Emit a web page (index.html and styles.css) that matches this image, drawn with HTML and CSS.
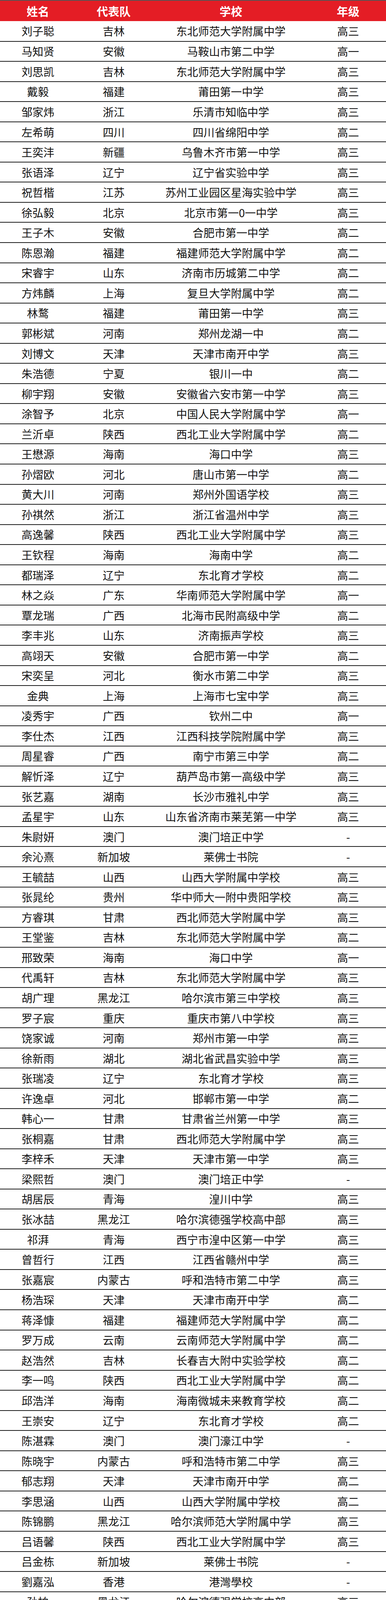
FILE: index.html
```html
<!DOCTYPE html>
<html lang="zh-CN">
<head>
<meta charset="utf-8">
<title>名单</title>
<link rel="stylesheet" href="styles.css">
</head>
<body>
<table class="roster">
<colgroup><col class="c-name"><col class="c-team"><col class="c-school"><col class="c-grade"></colgroup>
<thead><tr><th>姓名</th><th>代表队</th><th>学校</th><th>年级</th></tr></thead>
<tbody>
<tr><td>刘子聪</td><td>吉林</td><td>东北师范大学附属中学</td><td>高三</td></tr>
<tr><td>马知贤</td><td>安徽</td><td>马鞍山市第二中学</td><td>高一</td></tr>
<tr><td>刘思凯</td><td>吉林</td><td>东北师范大学附属中学</td><td>高三</td></tr>
<tr><td>戴毅</td><td>福建</td><td>莆田第一中学</td><td>高三</td></tr>
<tr><td>邹家炜</td><td>浙江</td><td>乐清市知临中学</td><td>高三</td></tr>
<tr><td>左希萌</td><td>四川</td><td>四川省绵阳中学</td><td>高二</td></tr>
<tr><td>王奕沣</td><td>新疆</td><td>乌鲁木齐市第一中学</td><td>高三</td></tr>
<tr><td>张语泽</td><td>辽宁</td><td>辽宁省实验中学</td><td>高三</td></tr>
<tr><td>祝哲楷</td><td>江苏</td><td>苏州工业园区星海实验中学</td><td>高三</td></tr>
<tr><td>徐弘毅</td><td>北京</td><td>北京市第一0一中学</td><td>高三</td></tr>
<tr><td>王子木</td><td>安徽</td><td>合肥市第一中学</td><td>高二</td></tr>
<tr><td>陈恩瀚</td><td>福建</td><td>福建师范大学附属中学</td><td>高二</td></tr>
<tr><td>宋睿宇</td><td>山东</td><td>济南市历城第二中学</td><td>高二</td></tr>
<tr><td>方炜麟</td><td>上海</td><td>复旦大学附属中学</td><td>高二</td></tr>
<tr><td>林鹜</td><td>福建</td><td>莆田第一中学</td><td>高三</td></tr>
<tr><td>郭彬斌</td><td>河南</td><td>郑州龙湖一中</td><td>高二</td></tr>
<tr><td>刘博文</td><td>天津</td><td>天津市南开中学</td><td>高三</td></tr>
<tr><td>朱浩德</td><td>宁夏</td><td>银川一中</td><td>高二</td></tr>
<tr><td>柳宇翔</td><td>安徽</td><td>安徽省六安市第一中学</td><td>高三</td></tr>
<tr><td>涂智予</td><td>北京</td><td>中国人民大学附属中学</td><td>高一</td></tr>
<tr><td>兰沂卓</td><td>陕西</td><td>西北工业大学附属中学</td><td>高二</td></tr>
<tr><td>王懋源</td><td>海南</td><td>海口中学</td><td>高三</td></tr>
<tr><td>孙熠欧</td><td>河北</td><td>唐山市第一中学</td><td>高二</td></tr>
<tr><td>黄大川</td><td>河南</td><td>郑州外国语学校</td><td>高三</td></tr>
<tr><td>孙祺然</td><td>浙江</td><td>浙江省温州中学</td><td>高三</td></tr>
<tr><td>高逸馨</td><td>陕西</td><td>西北工业大学附属中学</td><td>高三</td></tr>
<tr><td>王钦程</td><td>海南</td><td>海南中学</td><td>高二</td></tr>
<tr><td>都瑞泽</td><td>辽宁</td><td>东北育才学校</td><td>高二</td></tr>
<tr><td>林之焱</td><td>广东</td><td>华南师范大学附属中学</td><td>高一</td></tr>
<tr><td>覃龙瑞</td><td>广西</td><td>北海市民附高级中学</td><td>高二</td></tr>
<tr><td>李丰兆</td><td>山东</td><td>济南振声学校</td><td>高三</td></tr>
<tr><td>高翊天</td><td>安徽</td><td>合肥市第一中学</td><td>高二</td></tr>
<tr><td>宋奕呈</td><td>河北</td><td>衡水市第二中学</td><td>高三</td></tr>
<tr><td>金典</td><td>上海</td><td>上海市七宝中学</td><td>高三</td></tr>
<tr><td>凌秀宇</td><td>广西</td><td>钦州二中</td><td>高一</td></tr>
<tr><td>李仕杰</td><td>江西</td><td>江西科技学院附属中学</td><td>高三</td></tr>
<tr><td>周星睿</td><td>广西</td><td>南宁市第三中学</td><td>高二</td></tr>
<tr><td>解忻泽</td><td>辽宁</td><td>葫芦岛市第一高级中学</td><td>高三</td></tr>
<tr><td>张艺嘉</td><td>湖南</td><td>长沙市雅礼中学</td><td>高三</td></tr>
<tr><td>孟星宇</td><td>山东</td><td>山东省济南市莱芜第一中学</td><td>高三</td></tr>
<tr><td>朱尉妍</td><td>澳门</td><td>澳门培正中学</td><td>-</td></tr>
<tr><td>余沁熹</td><td>新加坡</td><td>莱佛士书院</td><td>-</td></tr>
<tr><td>王毓喆</td><td>山西</td><td>山西大学附属中学校</td><td>高三</td></tr>
<tr><td>张晁纶</td><td>贵州</td><td>华中师大一附中贵阳学校</td><td>高三</td></tr>
<tr><td>方睿琪</td><td>甘肃</td><td>西北师范大学附属中学</td><td>高三</td></tr>
<tr><td>王堂鉴</td><td>吉林</td><td>东北师范大学附属中学</td><td>高二</td></tr>
<tr><td>邢致荣</td><td>海南</td><td>海口中学</td><td>高一</td></tr>
<tr><td>代禹轩</td><td>吉林</td><td>东北师范大学附属中学</td><td>高三</td></tr>
<tr><td>胡广理</td><td>黑龙江</td><td>哈尔滨市第三中学校</td><td>高三</td></tr>
<tr><td>罗子宸</td><td>重庆</td><td>重庆市第八中学校</td><td>高三</td></tr>
<tr><td>饶家诚</td><td>河南</td><td>郑州市第一中学</td><td>高三</td></tr>
<tr><td>徐新雨</td><td>湖北</td><td>湖北省武昌实验中学</td><td>高三</td></tr>
<tr><td>张瑞凌</td><td>辽宁</td><td>东北育才学校</td><td>高三</td></tr>
<tr><td>许逸卓</td><td>河北</td><td>邯郸市第一中学</td><td>高二</td></tr>
<tr><td>韩心一</td><td>甘肃</td><td>甘肃省兰州第一中学</td><td>高三</td></tr>
<tr><td>张桐嘉</td><td>甘肃</td><td>西北师范大学附属中学</td><td>高三</td></tr>
<tr><td>李梓禾</td><td>天津</td><td>天津市第一中学</td><td>高三</td></tr>
<tr><td>梁熙哲</td><td>澳门</td><td>澳门培正中学</td><td>-</td></tr>
<tr><td>胡居辰</td><td>青海</td><td>湟川中学</td><td>高三</td></tr>
<tr><td>张冰喆</td><td>黑龙江</td><td>哈尔滨德强学校高中部</td><td>高三</td></tr>
<tr><td>祁湃</td><td>青海</td><td>西宁市湟中区第一中学</td><td>高三</td></tr>
<tr><td>曾哲行</td><td>江西</td><td>江西省赣州中学</td><td>高三</td></tr>
<tr><td>张嘉宸</td><td>内蒙古</td><td>呼和浩特市第二中学</td><td>高三</td></tr>
<tr><td>杨浩琛</td><td>天津</td><td>天津市南开中学</td><td>高二</td></tr>
<tr><td>蒋泽慷</td><td>福建</td><td>福建师范大学附属中学</td><td>高二</td></tr>
<tr><td>罗万成</td><td>云南</td><td>云南师范大学附属中学</td><td>高二</td></tr>
<tr><td>赵浩然</td><td>吉林</td><td>长春吉大附中实验学校</td><td>高二</td></tr>
<tr><td>李一鸣</td><td>陕西</td><td>西北工业大学附属中学</td><td>高二</td></tr>
<tr><td>邱浩洋</td><td>海南</td><td>海南微城未来教育学校</td><td>高二</td></tr>
<tr><td>王崇安</td><td>辽宁</td><td>东北育才学校</td><td>高二</td></tr>
<tr><td>陈湛霖</td><td>澳门</td><td>澳门濠江中学</td><td>-</td></tr>
<tr><td>陈晓宇</td><td>内蒙古</td><td>呼和浩特市第二中学</td><td>高三</td></tr>
<tr><td>郁志翔</td><td>天津</td><td>天津市南开中学</td><td>高二</td></tr>
<tr><td>李思涵</td><td>山西</td><td>山西大学附属中学校</td><td>高二</td></tr>
<tr><td>陈锦鹏</td><td>黑龙江</td><td>哈尔滨师范大学附属中学</td><td>高三</td></tr>
<tr><td>吕语馨</td><td>陕西</td><td>西北工业大学附属中学</td><td>高三</td></tr>
<tr><td>吕金栋</td><td>新加坡</td><td>莱佛士书院</td><td>-</td></tr>
<tr><td>劉嘉泓</td><td>香港</td><td>港灣學校</td><td>-</td></tr>
<tr><td>孙柏</td><td>黑龙江</td><td>哈尔滨德强学校高中部</td><td>高三</td></tr>
<tr><td>蒋双相</td><td>甘肃</td><td>甘肃省庆阳第一中学</td><td>高三</td></tr>
<tr><td>范文超</td><td>新疆</td><td>新疆生产建设兵团第二中学</td><td>高三</td></tr>
<tr><td>庞宏宁</td><td>吉林</td><td>四平市第一高级中学</td><td>高三</td></tr>
<tr><td>黄和鑫</td><td>贵州</td><td>贵阳市第一中学</td><td>高二</td></tr>
<tr><td>刘铠睿</td><td>新疆</td><td>昌吉州一中</td><td>高三</td></tr>
<tr><td>刘松瑞</td><td>贵州</td><td>贵阳市第一中学</td><td>高一</td></tr>
<tr><td>田文华</td><td>内蒙古</td><td>鄂尔多斯市第一中学</td><td>高三</td></tr>
<tr><td>卢芳豪</td><td>海南</td><td>文昌中学</td><td>高三</td></tr>
<tr><td>李和兴</td><td>宁夏</td><td>银川一中</td><td>高三</td></tr>
<tr><td>缪昕延</td><td>云南</td><td>昆明市第一中学</td><td>高二</td></tr>
<tr><td>张景奕</td><td>宁夏</td><td>银川一中</td><td>高三</td></tr>
<tr><td>常钫铭</td><td>黑龙江</td><td>哈尔滨市第三中学校</td><td>高三</td></tr>
<tr><td>杜昶颉</td><td>吉林</td><td>东北师范大学附属中学</td><td>高三</td></tr>
<tr><td>王书乾</td><td>新疆</td><td>新疆生产建设兵团第二中学</td><td>高三</td></tr>
<tr><td>周奕帆</td><td>新疆</td><td>乌鲁木齐市第一中学</td><td>高二</td></tr>
<tr><td>周宇谦</td><td>贵州</td><td>贵阳市第一中学</td><td>高二</td></tr>
<tr><td>徐浩哲</td><td>安徽</td><td>蚌埠第二中学</td><td>高三</td></tr>
<tr><td>申世祥</td><td>新疆</td><td>乌鲁木齐市第一中学</td><td>高三</td></tr>
<tr><td>刘孝然</td><td>内蒙古</td><td>通辽市第五中学</td><td>高二</td></tr>
<tr><td>金宇晨</td><td>贵州</td><td>贵阳市第一中学</td><td>高三</td></tr>
<tr><td>曾孟林</td><td>河南</td><td>郑州外国语学校</td><td>高二</td></tr>
<tr><td>王俊开</td><td>吉林</td><td>四平市第一高级中学</td><td>高三</td></tr>
<tr><td>王一</td><td>内蒙古</td><td>呼和浩特市第二中学</td><td>高三</td></tr>
<tr><td>李泽成</td><td>海南</td><td>海南中学</td><td>高二</td></tr>
<tr><td>马亦骏</td><td>河南</td><td>郑州外国语学校</td><td>高三</td></tr>
<tr><td>刘天宇</td><td>黑龙江</td><td>哈尔滨师范大学附属中学</td><td>高三</td></tr>
<tr><td>徐浩然</td><td>黑龙江</td><td>哈尔滨第九中学</td><td>高三</td></tr>
<tr><td>郭锦坤</td><td>宁夏</td><td>银川一中</td><td>高三</td></tr>
<tr><td>万师齐</td><td>海南</td><td>海南微城未来教育学校</td><td>高三</td></tr>
<tr><td>吴腾</td><td>海南</td><td>海南中学</td><td>高二</td></tr>
<tr><td>郭孟鑫</td><td>辽宁</td><td>锦州市锦州中学</td><td>高三</td></tr>
<tr><td>杨嘉烨</td><td>新疆</td><td>乌鲁木齐市第一中学</td><td>高三</td></tr>
<tr><td>俞伯凯</td><td>新疆</td><td>乌鲁木齐市第一中学</td><td>高三</td></tr>
<tr><td>李旭升</td><td>甘肃</td><td>甘肃省甘谷第一中学</td><td>高三</td></tr>
<tr><td>郭睿明</td><td>黑龙江</td><td>哈尔滨德强学校高中部</td><td>高三</td></tr>
<tr><td>李东平</td><td>甘肃</td><td>甘肃省兰州第一中学</td><td>高三</td></tr>
<tr><td>王一帆</td><td>山东</td><td>潍坊市寒亭区第一中学</td><td>高三</td></tr>
<tr><td>张世涵</td><td>青海</td><td>大通二中</td><td>高三</td></tr>
<tr><td>刘轩池</td><td>吉林</td><td>吉林市第一中学</td><td>高三</td></tr>
<tr><td>姜麒翔</td><td>青海</td><td>湟川中学</td><td>高三</td></tr>
<tr><td>段彦伯</td><td>青海</td><td>青海师范大学附属中学</td><td>高三</td></tr>
<tr><td>刘欣伟</td><td>青海</td><td>青海师范大学附属中学</td><td>高三</td></tr>
<tr><td>翟舜凡</td><td>内蒙古</td><td>鄂尔多斯市第一中学</td><td>高三</td></tr>
<tr><td>马咏翔</td><td>黑龙江</td><td>哈尔滨德强学校高中部</td><td>高三</td></tr>
<tr><td>贺镜纯</td><td>贵州</td><td>兴义八中</td><td>高三</td></tr>
<tr><td>冯泉淞</td><td>贵州</td><td>都匀一中</td><td>高三</td></tr>
<tr><td>孙劭祁</td><td>吉林</td><td>东北师范大学附属中学</td><td>高一</td></tr>
<tr><td>刘洪宇</td><td>黑龙江</td><td>哈尔滨市第三中学校</td><td>高三</td></tr>
<tr><td>李顺顺</td><td>宁夏</td><td>银川一中</td><td>高三</td></tr>
<tr><td>张兆燃</td><td>西藏</td><td>西藏民大附属中学</td><td>高二</td></tr>
<tr><td>赵柏涵</td><td>黑龙江</td><td>哈尔滨德强学校高中部</td><td>高三</td></tr>
<tr><td>王意荣</td><td>宁夏</td><td>银川二中</td><td>高二</td></tr>
<tr><td>郭跃鹏</td><td>宁夏</td><td>银川一中</td><td>高三</td></tr>
<tr><td>李佳浉</td><td>西藏</td><td>林芝市第一中学</td><td>高三</td></tr>
<tr><td>虎天乐</td><td>宁夏</td><td>银川一中</td><td>高三</td></tr>
<tr><td>单文杰</td><td>宁夏</td><td>银川一中</td><td>高三</td></tr>
<tr><td>石健坤</td><td>青海</td><td>青海油田第一中学</td><td>高三</td></tr>
<tr><td>赵可豪</td><td>青海</td><td>大通二中</td><td>高三</td></tr>
<tr><td>刘博朔</td><td>吉林</td><td>东北师范大学附属中学</td><td>高三</td></tr>
<tr><td>施人铭</td><td>澳门</td><td>澳门培正中学</td><td>-</td></tr>
<tr><td>蔡世篪</td><td>澳门</td><td>澳门濠江中学</td><td>-</td></tr>
<tr><td>张芷晴</td><td>澳门</td><td>澳门镜平中学</td><td>-</td></tr>
<tr><td>沈熙雨</td><td>西藏</td><td>西藏民大附属中学</td><td>高二</td></tr>
<tr><td>潘文博</td><td>西藏</td><td>西藏民大附属中学</td><td>高三</td></tr>
<tr><td>陈奕名</td><td>西藏</td><td>拉萨中学</td><td>高二</td></tr>
<tr><td>于航</td><td>西藏</td><td>拉萨中学</td><td>高二</td></tr>
<tr><td>杨馨悦</td><td>西藏</td><td>拉萨中学</td><td>高三</td></tr>
</tbody>
</table>
</body>
</html>
```
FILE: styles.css
```css
html, body {
  margin: 0;
  padding: 0;
  background: #ffffff;
}

body {
  font-family: "Noto Sans CJK SC", "Noto Sans", sans-serif;
  color: #111111;
}

.roster {
  width: 988px;
  border-collapse: collapse;
  table-layout: fixed;
}

.c-name { width: 194px; }
.c-team { width: 194px; }
.c-school { width: 406px; }
.c-grade { width: 194px; }

.roster thead tr {
  height: 53px;
}

.roster th {
  padding: 0;
  background: #e41d25;
  color: #ffffff;
  font-size: 29px;
  font-weight: 700;
  line-height: 1;
  text-align: center;
  vertical-align: middle;
  border-top: 2px solid #555555;
}

.roster tbody tr {
  height: 51.56px;
}

.roster td {
  padding: 0;
  font-size: 28px;
  line-height: 1;
  text-align: center;
  vertical-align: middle;
  border-bottom: 2px solid #1e1e1e;
  white-space: nowrap;
}
```
